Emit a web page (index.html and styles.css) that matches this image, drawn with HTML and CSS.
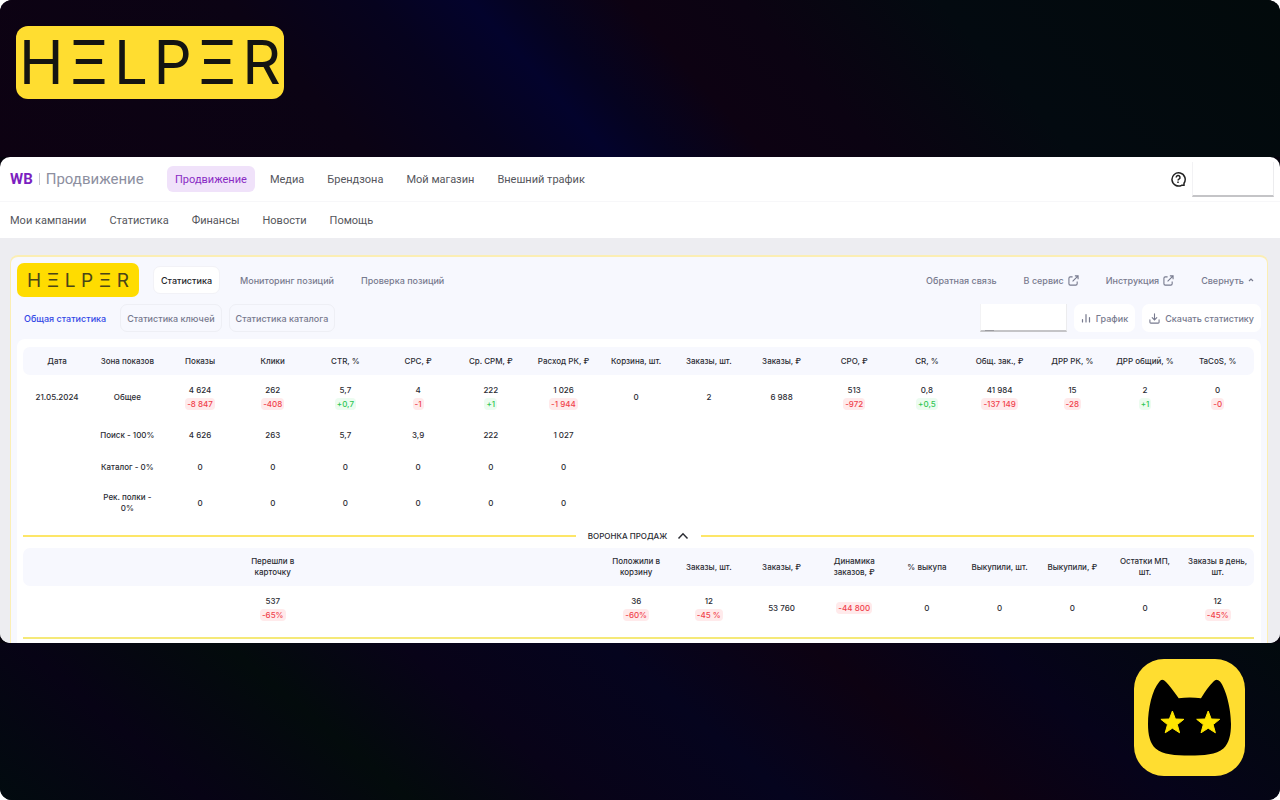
FILE: index.html
```html
<!DOCTYPE html>
<html lang="ru">
<head>
<meta charset="utf-8">
<meta name="viewport" content="width=device-width, initial-scale=1">
<title>HELPER — Продвижение</title>
<link rel="stylesheet" href="styles.css">
</head>
<body>
<div class="stage">
  <header class="stage-top">
    <div class="wordmark wordmark-lg" role="img" aria-label="HELPER"><span>H</span><span>Ξ</span><span>L</span><span>P</span><span>Ξ</span><span>R</span></div>
  </header>

  <main class="window">
    <div class="topbar">
      <a class="brand" href="#"><b>WB</b><i></i><span>Продвижение</span></a>
      <nav class="nav">
        <a class="nav-link active" href="#">Продвижение</a>
        <a class="nav-link" href="#">Медиа</a>
        <a class="nav-link" href="#">Брендзона</a>
        <a class="nav-link" href="#">Мой магазин</a>
        <a class="nav-link" href="#">Внешний трафик</a>
      </nav>
      <button class="help" aria-label="Справка">
        <svg width="16" height="16" viewBox="0 0 16 16" fill="none" stroke="#222" stroke-width="1.5"><path d="M14 12.200V14.300H11.600A6.600 6.600 0 1 1 14 12.200z"/><path d="M6.200 6.500a1.900 1.900 0 1 1 2.800 1.600c-.7.4-.9.700-.9 1.300"/><path d="M8 10.500v1.400"/></svg>
      </button>
      <input class="blank account" type="text" aria-label="Аккаунт">
    </div>
    <nav class="subnav">
      <a href="#">Мои кампании</a><a href="#">Статистика</a><a href="#">Финансы</a><a href="#">Новости</a><a href="#">Помощь</a>
    </nav>

    <div class="content">
      <section class="card">
        <div class="bar">
          <div class="wordmark wordmark-sm" role="img" aria-label="HELPER"><span>H</span><span>Ξ</span><span>L</span><span>P</span><span>Ξ</span><span>R</span></div>
          <button class="tab selected">Статистика</button>
          <button class="tab">Мониторинг позиций</button>
          <button class="tab">Проверка позиций</button>
          <div class="links">
            <a href="#">Обратная связь</a>
            <a href="#">В сервис <svg width="11" height="11" viewBox="0 0 12 12" fill="none" stroke="currentColor" stroke-width="1.200"><path d="M5 2H2.500A1.500 1.500 0 0 0 1 3.500v6A1.500 1.500 0 0 0 2.500 11h6A1.500 1.500 0 0 0 10 9.500V7M7.500 1H11v3.500M11 1L5 7"/></svg></a>
            <a href="#">Инструкция <svg width="11" height="11" viewBox="0 0 12 12" fill="none" stroke="currentColor" stroke-width="1.200"><path d="M5 2H2.500A1.500 1.500 0 0 0 1 3.500v6A1.500 1.500 0 0 0 2.500 11h6A1.500 1.500 0 0 0 10 9.500V7M7.500 1H11v3.500M11 1L5 7"/></svg></a>
            <button class="collapse">Свернуть <svg width="6" height="6" viewBox="0 0 6 6" fill="none" stroke="currentColor" stroke-width="1.200"><path d="M1 4l2-2 2 2"/></svg></button>
          </div>
        </div>
        <div class="bar bar-filters">
          <button class="filter current">Общая статистика</button>
          <button class="filter">Статистика ключей</button>
          <button class="filter">Статистика каталога</button>
          <div class="tools">
            <label class="period"><input class="blank" type="text" aria-label="Период"></label>
            <button class="tool"><svg width="10" height="10" viewBox="0 0 10 10" fill="none" stroke="currentColor" stroke-width="1.200" stroke-linecap="round"><path d="M1.500 6.500V9M5 1.500V9M8.500 4.500V9"/></svg>График</button>
            <button class="tool"><svg width="11" height="11" viewBox="0 0 12 12" fill="none" stroke="currentColor" stroke-width="1.200" stroke-linecap="round"><path d="M6 1v6.500M3.500 5L6 7.500 8.500 5M1 7.500V10q0 1 1 1h8q1 0 1-1V7.500"/></svg>Скачать статистику</button>
          </div>
        </div>

        <div class="sheet">
          <table class="grid">
            <colgroup><col class="col-date"><col span="16"></colgroup>
            <thead>
              <tr><th>Дата</th><th>Зона показов</th><th>Показы</th><th>Клики</th><th>CTR, %</th><th>CPC, ₽</th><th>Ср. CPM, ₽</th><th>Расход РК, ₽</th><th>Корзина, шт.</th><th>Заказы, шт.</th><th>Заказы, ₽</th><th>CPO, ₽</th><th>CR, %</th><th>Общ. зак., ₽</th><th>ДРР РК, %</th><th>ДРР общий, %</th><th>TaCoS, %</th></tr>
            </thead>
            <tbody>
              <tr class="row-total"><td>21.05.2024</td><td>Общее</td>
                <td>4 624<br><span class="down">-8 847</span></td>
                <td>262<br><span class="down">-408</span></td>
                <td>5,7<br><span class="up">+0,7</span></td>
                <td>4<br><span class="down">-1</span></td>
                <td>222<br><span class="up">+1</span></td>
                <td>1 026<br><span class="down">-1 944</span></td>
                <td>0</td><td>2</td><td>6 988</td>
                <td>513<br><span class="down">-972</span></td>
                <td>0,8<br><span class="up">+0,5</span></td>
                <td>41 984<br><span class="down">-137 149</span></td>
                <td>15<br><span class="down">-28</span></td>
                <td>2<br><span class="up">+1</span></td>
                <td>0<br><span class="down">-0</span></td></tr>
              <tr class="row-zone"><td></td><td>Поиск - 100%</td><td>4 626</td><td>263</td><td>5,7</td><td>3,9</td><td>222</td><td>1 027</td><td colspan="9"></td></tr>
              <tr class="row-zone"><td></td><td>Каталог - 0%</td><td>0</td><td>0</td><td>0</td><td>0</td><td>0</td><td>0</td><td colspan="9"></td></tr>
              <tr class="row-shelf"><td></td><td>Рек. полки -<br>0%</td><td>0</td><td>0</td><td>0</td><td>0</td><td>0</td><td>0</td><td colspan="9"></td></tr>
            </tbody>
          </table>

          <button class="divider">ВОРОНКА ПРОДАЖ <svg width="12" height="8" viewBox="0 0 12 8" fill="none" stroke="currentColor" stroke-width="1.500"><path d="M1.500 6.500L6 1.800l4.500 4.700"/></svg></button>

          <table class="grid grid-funnel">
            <colgroup><col class="col-date"><col span="16"></colgroup>
            <thead>
              <tr><th></th><th></th><th></th><th>Перешли в<br>карточку</th><th></th><th></th><th></th><th></th><th>Положили в<br>корзину</th><th>Заказы, шт.</th><th>Заказы, ₽</th><th>Динамика<br>заказов, ₽</th><th>% выкупа</th><th>Выкупили, шт.</th><th>Выкупили, ₽</th><th>Остатки МП,<br>шт.</th><th>Заказы в день,<br>шт.</th></tr>
            </thead>
            <tbody>
              <tr class="row-total"><td></td><td></td><td></td>
                <td>537<br><span class="down">-65%</span></td>
                <td></td><td></td><td></td><td></td>
                <td>36<br><span class="down">-60%</span></td>
                <td>12<br><span class="down">-45 %</span></td>
                <td>53 760</td><td><span class="down">-44 800</span></td>
                <td>0</td><td>0</td><td>0</td><td>0</td>
                <td>12<br><span class="down">-45%</span></td></tr>
            </tbody>
          </table>
          <hr class="rule">
        </div>
      </section>
    </div>
  </main>

  <footer class="stage-bottom">
    <svg class="cat" width="111" height="117" viewBox="0 0 111 117" role="img" aria-label="Кот">
      <rect width="111" height="117" rx="30" fill="#ffdd30"/>
      <path d="M25.500 22.500Q28 19 32 23Q36 27 44.700 39.300Q55.700 37.500 67 39.300Q73 29 79.500 22.500Q82.500 19 86 22.500C92 30 97 50 97 65C97 76 95 84 89.700 89.300C82 96 70 96.500 55.700 96.500C41 96.500 29 96 21.300 89.300C16 84 14 76 14 65C14 50 18 31 25.500 22.500Z" fill="#000"/>
      <g fill="#ffe500" stroke="#ffe500" stroke-linejoin="round">
        <path transform="translate(38.400 64)" d="M0-12L3-4 11.500-3.700 4.900 1.600 7.200 9.800 0 5.200-7.200 9.800-4.900 1.600-11.500-3.700-3-4z"/>
        <path transform="translate(74.200 64)" d="M0-12L3-4 11.500-3.700 4.900 1.600 7.200 9.800 0 5.200-7.200 9.800-4.900 1.600-11.500-3.700-3-4z"/>
      </g>
    </svg>
  </footer>
</div>
</body>
</html>
```

FILE: styles.css
```css
* { box-sizing: border-box; }

body {
  margin: 0;
  background: #fff;
  font-family: Inter, "Noto Sans", sans-serif;
  color: #2b2c33;
}

a { color: inherit; text-decoration: none; }
button { border: 0; background: none; padding: 0; font: inherit; color: inherit; cursor: pointer; }

.stage {
  min-height: 100vh;
  display: flex;
  flex-direction: column;
  border-radius: 12px;
  overflow: hidden;
  background: #05030c;
}

.stage-top {
  display: flex;
  padding: 26px 16px 58px;
  background: linear-gradient(48deg, #0d0212 0%, #0b0314 26%, #06031e 36%, #03032c 43%, #050320 47%, #0d0212 54%, #0b0312 62%, #030a10 76%, #020a0b 100%);
}

.stage-bottom {
  flex: 1;
  display: flex;
  justify-content: flex-end;
  align-items: flex-start;
  padding: 16px 35px 24px;
  background: linear-gradient(40deg, #020b0f 0%, #070315 14%, #030b0c 28%, #080318 40%, #05041e 54%, #0d0212 68%, #06031a 80%, #020a0d 100%);
}

.wordmark { display: flex; align-items: center; justify-content: space-between; color: #141412; }
.wordmark-lg {
  width: 268px;
  height: 73px;
  padding: 0 3px;
  border-radius: 12px;
  background: #ffdd30;
  font-size: 60px;
  font-weight: 400;
  line-height: 73px;
}
.wordmark-sm {
  width: 122px;
  height: 34px;
  padding: 0 10px;
  margin-right: 14px;
  border-radius: 7px;
  background: #ffdc00;
  font-size: 19px;
  font-weight: 400;
  color: #4a4518;
}

.window { border-radius: 10px; overflow: hidden; background: #fff; }

.topbar {
  display: flex;
  align-items: center;
  height: 45px;
  padding: 0 6px 0 10px;
  border-bottom: 1px solid #f7f7f9;
  font-family: Roboto, "Noto Sans", sans-serif;
  font-size: 11px;
  color: #55565c;
}
.brand { display: flex; align-items: center; gap: 6px; width: 157px; font-size: 15px; color: #8d8f9f; }
.brand b { color: #7c1fc0; font-weight: 700; }
.brand i { width: 1px; height: 12px; background: #c9c9d2; }
.nav { display: flex; gap: 7px; flex: 1; }
.nav-link { padding: 1px 8px 0; line-height: 25px; border-radius: 6px; }
.nav-link.active { background: #f0e2fa; color: #8a2bc4; }
.help { display: flex; margin-right: 6px; }
.blank {
  display: block;
  border: 0;
  border-bottom: 2px solid #c4c4c7;
  border-right: 1px solid #ececee;
  border-left: 1px solid #f2f2f4;
  background: #fff;
}
.account { width: 82px; height: 35px; }

.subnav { display: flex; gap: 23px; padding: 1px 10px 0; font-family: Roboto, "Noto Sans", sans-serif; font-size: 11px; line-height: 35px; color: #55565c; }

.content { padding: 17px 12px 0 10px; background: #ededf1; }
.card {
  border: 1px solid #fbeeb4;
  border-top-width: 2px;
  border-bottom: 0;
  border-radius: 8px 8px 0 0;
  padding: 6px 6px 0;
  background: #f7f8fe;
}
.bar { display: flex; align-items: center; height: 34px; font-size: 9px; font-weight: 500; color: #777a8e; }
.tab { height: 28px; padding: 0 7px; margin-right: 13px; border-radius: 7px; }
.tab.selected { background: #fff; color: #24252b; border: 1px solid #f2f2f7; }
.links { display: flex; gap: 27px; margin-left: auto; padding-right: 7px; }
.links a, .collapse { display: flex; align-items: center; gap: 4px; }

.bar-filters { margin-top: 4px; gap: 7px; }
.filter { height: 28px; padding: 0 6px; border: 1px solid #eeeff5; border-radius: 7px; }
.filter.current { border-color: transparent; color: #3348e6; }
.tools { display: flex; gap: 7px; margin-left: auto; align-items: center; }
.tool { display: flex; align-items: center; gap: 5px; height: 28px; padding: 0 7px; border-radius: 7px; background: #fff; }
.period { position: relative; display: block; }
.period .blank { width: 87px; height: 28px; }
.period::after { content: ""; position: absolute; left: 5px; bottom: 1px; width: 9px; height: 1px; background: #9b9ba0; }

.sheet { margin-top: 4px; padding: 8px 7px 4px 6px; border-radius: 8px 8px 0 0; background: #fff; }
.grid { width: 100%; table-layout: fixed; border-collapse: separate; border-spacing: 0; font-size: 8px; line-height: 11px; font-weight: 500; text-align: center; }
.col-date { width: 68px; }
.grid th, .grid td { padding: 0; font-weight: 500; white-space: nowrap; vertical-align: middle; }
.grid th { height: 28px; background: #f7f8fe; }
.grid th:first-child { border-radius: 7px 0 0 7px; }
.grid th:last-child { border-radius: 0 7px 7px 0; }
.grid-funnel th { height: 38px; }
.row-total { height: 44px; line-height: 14px; }
.row-zone { height: 32px; }
.row-shelf { height: 40px; }
.down, .up { display: inline-block; padding: 0 2px; line-height: 12px; border-radius: 4px; }
.down { background: #ffeaeb; color: #f0424b; }
.up { background: #ecfcf0; color: #2fc653; }

.divider { display: flex; align-items: center; gap: 10px; width: 100%; height: 25px; font-size: 8px; font-weight: 500; }
.divider::before, .divider::after { content: ""; flex: 1; height: 2px; background: #fde668; }
.divider::before { margin-right: 2px; }
.divider::after { margin-left: 2px; }
.rule { height: 2px; margin: 7px 0 0; border: 0; background: #f5e978; }
```
